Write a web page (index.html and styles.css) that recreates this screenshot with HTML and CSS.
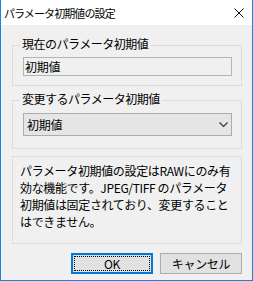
FILE: index.html
```html
<!DOCTYPE html>
<html lang="ja">
<head>
<meta charset="utf-8">
<link rel="stylesheet" href="styles.css">
</head>
<body>
<div class="window">
  <div class="titlebar">
    <span class="title">パラメータ初期値の設定</span>
    <svg class="close" width="10" height="10" viewBox="0 0 10 10"><path d="M0.5 0.5 L9.5 9.5 M9.5 0.5 L0.5 9.5" stroke="#111" stroke-width="1" fill="none"/></svg>
  </div>
  <div class="content">
    <fieldset class="group g1">
      <legend>現在のパラメータ初期値</legend>
      <div class="textbox">初期値</div>
    </fieldset>
    <fieldset class="group g2">
      <legend>変更するパラメータ初期値</legend>
      <div class="select"><span>初期値</span><svg class="chev" width="9" height="6" viewBox="0 0 9 6"><path d="M0.5 0.5 L4.5 4.5 L8.5 0.5" stroke="#333" stroke-width="1.1" fill="none"/></svg></div>
    </fieldset>
    <div class="note">パラメータ初期値の設定はRAWにのみ有<br>効な機能です。JPEG/TIFF&nbsp;のパラメータ<br>初期値は固定されており、変更すること<br>はできません。</div>
    <div class="buttons">
      <button class="btn primary">OK</button>
      <button class="btn">キャンセル</button>
    </div>
  </div>
</div>
</body>
</html>
```
FILE: styles.css
```css
html, body {
  margin: 0;
  padding: 0;
  background: #f0f0f0;
}
body {
  font-family: "Noto Sans CJK JP", "Noto Sans", sans-serif;
  color: #000;
}
.window {
  width: 253px;
  height: 281px;
  box-sizing: border-box;
  border: 1px solid #1883d7;
  border-top: 0;
  display: flex;
  flex-direction: column;
  background: #f0f0f0;
}
.titlebar {
  height: 25px;
  flex: none;
  background: #fff;
  display: flex;
  align-items: center;
  justify-content: space-between;
  padding: 0 8px 0 3px;
}
.title {
  font-size: 11px;
  line-height: 16px;
  letter-spacing: -0.9px;
  color: #000;
}
.close {
  display: block;
}
.content {
  flex: 1;
  padding: 11px 10px 0 11px;
  display: flex;
  flex-direction: column;
}
.group {
  margin: 0;
  min-width: 0;
  border: 1px solid #dcdcdc;
  padding: 2px 9px 9px 10px;
}
.group legend {
  font-size: 12px;
  line-height: 16px;
  letter-spacing: -0.5px;
  padding: 0 2px 3px;
  margin-left: -3px;
}
.textbox {
  height: 19px;
  box-sizing: border-box;
  border: 1px solid #b4b4b4;
  background: #f0f0f0;
  font-size: 12px;
  line-height: 17px;
  padding-left: 1px;
  letter-spacing: -0.3px;
}
.g2 {
  margin-top: 5px;
  padding-top: 3px;
  padding-bottom: 12px;
}
.select {
  height: 23px;
  box-sizing: border-box;
  border: 1px solid #acacac;
  background: #e5e5e5;
  display: flex;
  align-items: center;
  justify-content: space-between;
  padding: 0 3px 0 3px;
  font-size: 12px;
  letter-spacing: -0.3px;
}
.chev {
  display: block;
}
.note {
  margin-top: 7px;
  border: 1px solid #dcdcdc;
  padding: 5px 4px 13px 7px;
  font-size: 12px;
  line-height: 17px;
  letter-spacing: -0.35px;
  white-space: nowrap;
}
.buttons {
  display: flex;
  justify-content: flex-end;
  gap: 7px;
  margin-top: 9px;
}
.btn {
  width: 82px;
  height: 21px;
  box-sizing: border-box;
  border: 1px solid #adadad;
  background: #e1e1e1;
  font-family: "Noto Sans CJK JP", "Noto Sans", sans-serif;
  font-size: 12px;
  line-height: 17px;
  padding: 0;
  color: #000;
  letter-spacing: -0.3px;
}
.primary {
  border-color: #0078d7;
  box-shadow: inset 0 0 0 1px #0078d7;
  outline: 1px dotted #000;
  outline-offset: -4px;
}
```
